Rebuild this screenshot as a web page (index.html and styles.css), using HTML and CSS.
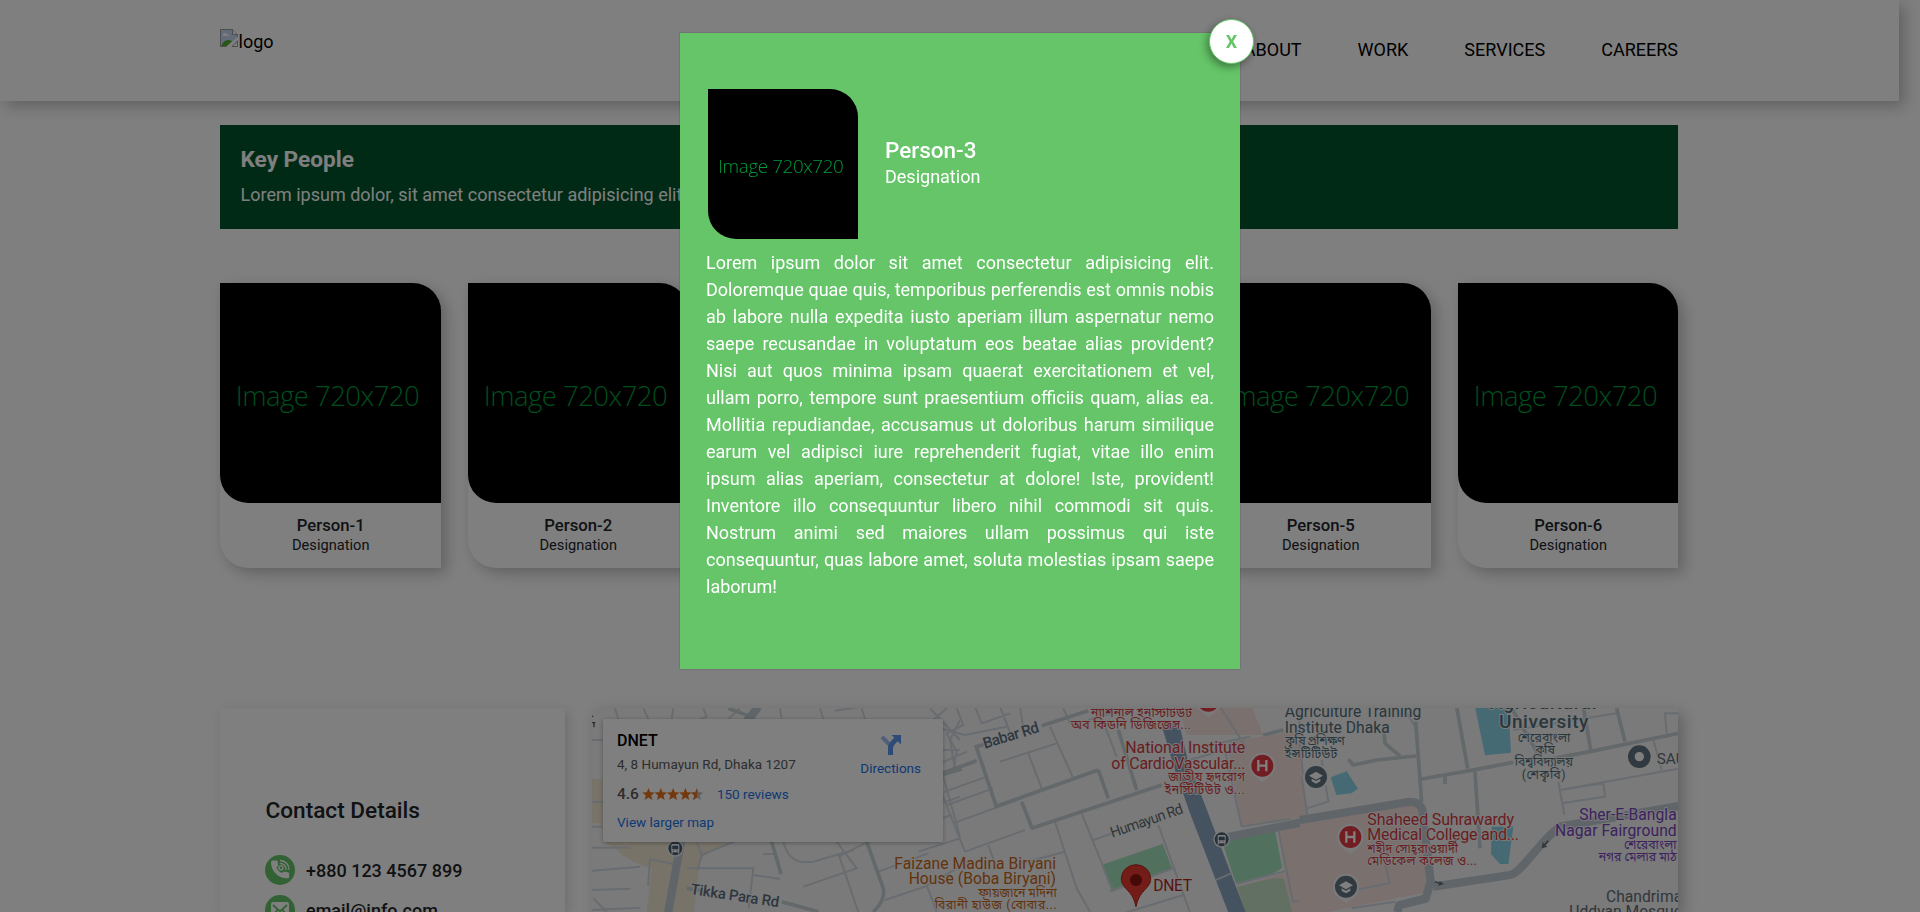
FILE: index.html
```html
<!DOCTYPE html>
<html lang="en">
<head>
<meta charset="utf-8">
<title>Key People</title>
<link rel="stylesheet" href="styles.css">
</head>
<body>
<div class="page">
  <header class="header">
    <div class="container header-inner">
      <div class="logo">
        <svg class="logo-mark" viewBox="0 0 18 18"><path d="M.5 17.5V.5h12l5 5v6l-9 6z" fill="#c6d6f5" stroke="#9a9a9a"/><path d="M12.500 .5v5h5" fill="#fff" stroke="#9a9a9a"/><path d="M3 6c0-1.500 1-2 2-2s2 .6 2.200 1.500c1.200-.2 1.800.5 1.800 1.500H3z" fill="#fff"/><path d="M1 17c2-4 4-6 7-6 2 0 3 .5 4 1.500L7 17z" fill="#4fae32"/><path d="M18 7.500v3.500l-8 7H6z" fill="#fff"/><path d="M17.500 12v5.500H12z" fill="#fff" stroke="#9a9a9a"/></svg><span>logo</span>
      </div>
      <nav class="nav"><a>ABOUT</a><a>WORK</a><a>SERVICES</a><a>CAREERS</a></nav>
    </div>
  </header>
  <main class="container">
    <section class="banner">
      <h1>Key People</h1>
      <p>Lorem ipsum dolor, sit amet consectetur adipisicing elit.</p>
    </section>
    <section class="people">
      <article class="person"><svg class="photo" viewBox="0 0 220 220"><text x="15.500" y="123" textLength="184">Image 720x720</text></svg><h2>Person-1</h2><p>Designation</p></article>
      <article class="person"><svg class="photo" viewBox="0 0 220 220"><text x="15.500" y="123" textLength="184">Image 720x720</text></svg><h2>Person-2</h2><p>Designation</p></article>
      <article class="person"><svg class="photo" viewBox="0 0 220 220"></svg><h2></h2><p></p></article>
      <article class="person"><svg class="photo" viewBox="0 0 220 220"></svg><h2></h2><p></p></article>
      <article class="person"><svg class="photo" viewBox="0 0 220 220"><text x="15.500" y="123" textLength="184">Image 720x720</text></svg><h2>Person-5</h2><p>Designation</p></article>
      <article class="person"><svg class="photo" viewBox="0 0 220 220"><text x="15.500" y="123" textLength="184">Image 720x720</text></svg><h2>Person-6</h2><p>Designation</p></article>
    </section>
    <section class="contact">
      <div class="details">
        <h2>Contact Details</h2>
        <div class="detail">
          <svg class="detail-icon" viewBox="0 0 30 30"><circle cx="15" cy="15" r="15" fill="#65c568"/><path d="M8 5.500l3.500 0c.8 0 1 .5 1.100 1.200l.4 3.500c0 .8-.3 1.200-1.500 2.200 1.200 2.800 3 4.600 5.600 5.700 1-1.300 1.400-1.500 2.200-1.400l3.600.6c.8.2 1.200.5 1.200 1.200v3.200c0 1-.7 1.500-1.800 1.500C12.500 23.200 6 15.500 6 7.200 6 6.200 6.800 5.500 8 5.500z" fill="#fff"/><g fill="none" stroke="#fff" stroke-width="1.300"><path d="M15 5.500a9 9 0 0 1 9 9.500M14.800 8.300a6.500 6.500 0 0 1 6.400 6.700"/><circle cx="16" cy="12.800" r="2"/></g></svg>
          <span>+880 123 4567 899</span>
        </div>
        <div class="detail">
          <svg class="detail-icon" viewBox="0 0 30 30"><circle cx="15" cy="15" r="15" fill="#65c568"/><rect x="6" y="7" width="18" height="15" rx="2" fill="#fff"/><path d="M8 10l7 6.500 7-6.500M8 20l4.500-5M22 20l-4.500-5" fill="none" stroke="#65c568" stroke-width="1.800"/></svg>
          <span>email@info.com</span>
        </div>
      </div>
      <div class="map">
        <svg class="map-canvas" viewBox="592 708 1086 204">
          <g transform="translate(580 700) scale(.33333)">
            <g class="area-sand"><path d="M36 235l35 5 10 60v130l-45-130zM36 310h32v60H36zM75 425h375c-50 25-80 35-90 60l-20 160H200l15-140c-40-10-80-30-110-60z"/></g>
            <g class="road">
              <path d="M36 120h35M36 305h35M36 380h30M36 443h115M36 512l145-12M36 570l115-4M36 630l145-7M40 595l40 41M210 478l-6 80M210 478l70 14M320 505h200l-14 120M520 525l80 12M350 425l15 40-12 45M365 465l100-42M550 462h34M670 560l160-55-60-80M775 460l60 176M775 470l80-40M895 515l150-55M1015 455l125-40M915 600l120-40 105-60M1040 555l30 80M105 25l10 32M190 25l15 32M280 25l-5 32M370 25l10 25-30 12M480 25l-35 32M600 25l5 32M720 25l10 32M765 32l80-12M845 25l10 32M1050 25l90 95M1060 60l40-35M1140 60l-30 60 15 90M1085 150h55M1085 310l55-20M1085 355l30-10M1090 230l50 180"/>
              <path d="M610 425c15 60 50 65 90 60l120-35"/>
            </g>
            <g class="road mid"><path d="M575 425l28 97M445 25l80 30M320 565l60 10M605 605l110 30M860 425l50 140c5 30-10 50-30 71M1085 225l60-18"/></g>
            <path class="road wide" d="M303 425l-40 220"/><path class="road wide" d="M535 20l-35 45"/>
          </g>
          <g transform="translate(940 700) scale(.33333)">
            <g class="area-pink"><path d="M715 20l220 0 35 85-230 0zM860 125l210-30 30 250-195 35zM1015 390l80-22v270h-45zM890 560l140-40 20 116H900z"/></g>
            <g class="area-green"><path d="M484 495l184-63 28 73-182 65zM845 420l160-28 22 112-30 18-110 28z"/><path fill-opacity=".6" d="M893 560l110-26 30 2 24 106H915z"/></g>
            <g class="road">
              <path d="M105 20l20 50M125 70l85-30M0 85l75 20 125-25M50 25l20 50-50 25 30 55-10 60M80 155L-10 195M0 280l140-50M45 368l205-75M75 455l-80-200M75 455l180-65M20 315l140-50M145 435l20 55M245 490l130-35M180 185l170-55M330 80l70 155M265 160l40 105M180 20l35 90M240 20l10 65M345 365l65 200 40 70M425 340l95 235M460 420l80-28M510 575l190-70M550 640l180-55M655 375l95 262M370 25l20 45M445 60l100-30M480 40l50 130M715 190l120-35M840 20l80 125M905 380l-50-230M905 380l150-24M1070 180l30 160M1015 390l45 220M890 552l145-38M1060 605l80-10M780 140l150-30M1075 20l5 70"/>
            </g>
            <g class="road mid"><path d="M107 135l63 188M0 222l110-40M110 140l60-20M305 77l140-45M165 320l310-110M475 210l30 85M275 385l390-130M245 305l32 82M535 90l55 180M970 105l60-15"/></g>
            <path class="road wide" d="M860 412l360-72"/>
            <path d="M660 60h55l28 120 50 130 125 330h-52L750 340l-45-130z" fill="#8ba5c1"/>
            <path d="M828 540l50-22" stroke="#d9dde0" stroke-width="5"/>
          </g>
          <g transform="translate(1300 700) scale(.33333)">
            <path class="area-pink" d="M0 368l330-60c35 0 40 20 42 50l15 170-15 50-290 58H0zM-60 100L0 90l20 260-50 10z"/>
            <g class="area-water"><path d="M525 20h100l8 138-78 8zM92 232l48-18 34 52-20 14-45 5zM575 380h65l-15 112h-25l-27-30z"/></g>
            <g class="road">
              <path d="M20 325l65-20-20-125M5 230l18 120M255 490l14 60-155 30M155 625l130-20M780 270l130-20 5 40-130 20M775 245l18 100M1060 120l25 90M780 270l360-65M640 90l310-50M0 130l10 100M1100 100l-5-60h45M310 25l40 60"/>
            </g>
            <g class="road mid"><path d="M347 65l18 240M365 237l160-28 115-22M725 182l148-28 267-55M470 20l33 185M525 215l15 230M635 25l90 155M850 20l22 130M950 25l25 100M145 178l15 17 70-15 118-12M250 75l5 55 45 38M435 230v22"/></g>
            <path class="road wide" d="M0 360l325-54c45-3 45 30 45 55l22 185-15 50-80 20-5 20M400 560l230-35c35-5 95-110 150-145l360-62"/>
            <path d="M745 422l-18 20M405 545l22 8" stroke="#6d7276" stroke-width="5"/>
            <path d="M725 444l3-18 14 15zM432 552l-17 6 4-15z" fill="#6d7276"/>
          </g>
          <g class="label" transform="translate(580 700) scale(.33333)">
            <g fill="#5d6e82" font-weight="500" font-size="45"><text transform="translate(330 582) rotate(8.500)" textLength="268">Tikka Para Rd</text></g>
            <path d="M36 49h4M34 68h12M42 68v14" stroke="#555d65" stroke-width="4" fill="none"/>
            <g fill="#c76716" font-size="47"><text x="943" y="507" textLength="485">Faizane Madina Biryani</text><text x="986" y="553" textLength="442">House (Boba Biryani)</text><text x="1195" y="590" font-size="37" textLength="235">ফায়জানে মদিনা</text><text x="1064" y="628" font-size="37" textLength="366">বিরানী হাউজ (বোবার...</text></g>
          </g>
          <g class="label" transform="translate(940 700) scale(.33333)">
            <text transform="translate(134 146) rotate(-17)" font-size="46" font-weight="500" fill="#5d6e82" textLength="174">Babar Rd</text>
            <text transform="translate(517 413) rotate(-19)" font-size="44" fill="#646a70" textLength="228">Humayun Rd</text>
            <g fill="#d43c43" font-size="48"><text x="453" y="50" font-size="37" textLength="303">ন্যাশনাল ইনস্টিটিউট</text><text x="393" y="87" font-size="37" textLength="360">অব কিডনি ডিজিজেস...</text><text x="556" y="159" textLength="360">National Institute</text><text x="514" y="206" textLength="402">of CardioVascular...</text><text x="685" y="244" font-size="37" textLength="230">জাতীয় হৃদরোগ</text><text x="674" y="281" font-size="37" textLength="240">ইনস্টিটিউট ও...</text></g>
            <g fill="#546e7a" font-size="47"><text x="1034" y="52" textLength="410">Agriculture Training</text><text x="1034" y="98" textLength="315">Institute Dhaka</text><text x="1034" y="136" font-size="37" textLength="178">কৃষি প্রশিক্ষণ</text><text x="1034" y="174" font-size="37" textLength="158">ইন্সটিটিউট</text></g>
            <text x="640" y="573" font-size="47" fill="#b3261e" textLength="116">DNET</text>
          </g>
          <g class="label" transform="translate(1300 700) scale(.33333)">
            <g fill="#546e7a" font-weight="500" font-size="57"><text x="570" y="27" textLength="320">Agricultural</text><text x="597" y="85" textLength="268">University</text></g>
            <g fill="#546e7a" font-size="37"><text x="653" y="125" textLength="158">শেরেবাংলা</text><text x="702" y="163" textLength="58">কৃষি</text><text x="643" y="199" textLength="175">বিশ্ববিদ্যালয়</text><text x="665" y="238" textLength="132">(শেকৃবি)</text></g>
            <text x="1070" y="192" font-size="46" fill="#646e74">SAU</text>
            <g fill="#d43c43" font-size="48"><text x="202" y="374" textLength="440">Shaheed Suhrawardy</text><text x="202" y="420" textLength="455">Medical College and...</text><text x="202" y="458" font-size="37" textLength="272">শহীদ সোহ্‌রাওয়ার্দী</text><text x="202" y="496" font-size="37" textLength="328">মেডিকেল কলেজ ও...</text></g>
            <g fill="#7a45bd" font-size="47"><text x="838" y="360" textLength="292">Sher-E-Bangla</text><text x="765" y="407" textLength="365">Nagar Fairground</text><text x="972" y="446" font-size="37" textLength="158">শেরেবাংলা</text><text x="896" y="482" font-size="37" textLength="234">নগর মেলার মাঠ</text></g>
            <g fill="#646e74" font-size="47"><text x="918" y="606">Chandrima</text><text x="808" y="652">Uddyan Mosque</text></g>
          </g>
          <defs>
            <path id="drop" d="M0 -39a39 39 0 0 1 39 39c0 22-13 29-23 38L0 50-16 38C-26 29-39 22-39 0A39 39 0 0 1 0-39z"/>
            <g id="school"><use href="#drop" fill="#f4f4f4"/><circle r="33" fill="#607580"/><path d="M-21-4L0-16 21-4 0 8zM-13 5v8L0 20l13-7V5L0 12z" fill="#fff"/></g>
            <g id="hospital"><use href="#drop" fill="#f4f4f4"/><circle r="33" fill="#e23b44"/><path d="M-12-17v34M12-17v34M-12 0h24" stroke="#fff" stroke-width="7"/></g>
            <g id="bus"><circle r="25" fill="#f4f4f4"/><circle r="21" fill="#4b6076"/><rect x="-12" y="-13" width="24" height="25" rx="4" fill="#fff"/><path d="M-8-7H8V2H-8zM-8 7h4M4 7h4" fill="#4b6076" stroke="#4b6076" stroke-width="2"/><path d="M-10 12v4M10 12v4" stroke="#fff" stroke-width="4"/></g>
          </defs>
          <g transform="translate(580 700) scale(.33333)"><use href="#bus" x="286" y="445"/></g>
          <g transform="translate(940 700) scale(.33333)"><use href="#hospital" x="805" y="2"/><use href="#hospital" x="967" y="197"/><use href="#bus" x="845" y="418"/><path d="M588 620c-6-25-12-35-24-48-14-15-20-22-20-36a44 42 0 0 1 88 0c0 14-6 21-20 36-12 13-18 23-24 48z" fill="#e8392e" stroke="#a9241c" stroke-width="3"/><circle cx="588" cy="540" r="18" fill="#8b1410"/></g>
          <g transform="translate(1300 700) scale(.33333)"><use href="#school" x="48" y="231"/><use href="#school" x="138" y="560"/><use href="#hospital" x="151" y="411"/><use href="#drop" x="1018" y="170" fill="#f4f4f4"/><circle cx="1018" cy="170" r="24" fill="#fff" stroke="#607580" stroke-width="20"/></g>
        </svg>
        <div class="place">
          <div class="place-main">
            <strong>DNET</strong>
            <p class="address">4, 8 Humayun Rd, Dhaka 1207</p>
            <p class="rating"><b>4.6</b><svg class="stars" viewBox="0 0 61 13"><defs><path id="star" d="M6.500 0l1.700 4.300 4.500.3-3.500 2.900 1.200 4.500-3.900-2.500L2.600 12l1.200-4.500L.3 4.600l4.500-.3z"/></defs><g fill="#e7711b"><use href="#star"/><use href="#star" x="12.300"/><use href="#star" x="24.600"/><use href="#star" x="36.900"/></g><use href="#star" x="48.500" fill="#bbb"/><path d="M55 0v9.500L51.100 12l1.200-4.500-3.500-2.900 4.500-.3z" fill="#e7711b"/></svg><a>150 reviews</a></p>
            <a>View larger map</a>
          </div>
          <div class="directions"><svg viewBox="0 0 22 20"><path d="M2 2l8 8" stroke="#a3c0f5" stroke-width="4"/><path d="M10.500 20v-7c0-3 1-4 3-6l3-3" fill="none" stroke="#5c94ee" stroke-width="5"/><path d="M11.500 0H21v9.500z" fill="#5c94ee"/></svg><a>Directions</a></div>
        </div>
      </div>
    </section>
  </main>
</div>
<div class="overlay">
  <div class="modal">
    <button class="close">X</button>
    <div class="modal-head">
      <svg class="photo modal-photo" viewBox="0 0 220 220"><text x="15" y="123" textLength="184">Image 720x720</text></svg>
      <div class="modal-name"><h2>Person-3</h2><p>Designation</p></div>
    </div>
    <p class="bio">Lorem ipsum dolor sit amet consectetur adipisicing elit. Doloremque quae quis, temporibus perferendis est omnis nobis ab labore nulla expedita iusto aperiam illum aspernatur nemo saepe recusandae in voluptatum eos beatae alias provident? Nisi aut quos minima ipsam quaerat exercitationem et vel, ullam porro, tempore sunt praesentium officiis quam, alias ea. Mollitia repudiandae, accusamus ut doloribus harum similique earum vel adipisci iure reprehenderit fugiat, vitae illo enim ipsum alias aperiam, consectetur at dolore! Iste, provident! Inventore illo consequuntur libero nihil commodi sit quis. Nostrum animi sed maiores ullam possimus qui iste consequuntur, quas labore amet, soluta molestias ipsam saepe laborum!</p>
  </div>
</div>
</body>
</html>
```
FILE: styles.css
```css
* { box-sizing: border-box; margin: 0; padding: 0; }
html { overflow: hidden; }
body { height: 912px; overflow: hidden; background: #fff; color: #212529; font: 18px/27px Roboto, sans-serif; }
.page { width: 1920px; height: 912px; padding-right: 21px; overflow: hidden; background: #fff; }
.container { width: 1458px; margin: 0 auto 0 220px; }
.header { height: 101px; background: #fff; box-shadow: 5px 5px 15px rgba(0, 0, 0, .25); color: #000; }
.header-inner { display: flex; justify-content: space-between; }
.logo { display: flex; padding-top: 28px; }
.logo-mark { width: 18px; height: 18px; margin: 1px .5px 0 0; }
.nav { display: flex; gap: 56px; padding-top: 36px; }
.banner { height: 104px; margin-top: 24px; padding: 21px 20.500px; background: #00552a; color: #fff; }
.banner h1 { font-size: 22.600px; line-height: 27px; font-weight: 700; }
.banner p { margin-top: 8px; }
.people { display: grid; grid-template-columns: repeat(6, 1fr); gap: 27px; margin-top: 54px; }
.person { height: 285px; text-align: center; border-radius: 0 28px 0 28px; background: #fff; box-shadow: 5px 5px 15px rgba(0, 0, 0, .25); }
.photo { display: block; width: 100%; height: 220px; background: #000; border-radius: 0 28px 0 28px; }
.photo text { font: 300 27.500px "Open Sans", sans-serif; fill: #009a3c; }
.person h2 { margin-top: 13px; padding-left: 1px; font-size: 16.700px; line-height: 20px; font-weight: 500; }
.person p { margin-top: -1px; padding-left: 1px; font-size: 14.630px; line-height: 20px; }
.contact { display: flex; gap: 27px; margin-top: 140px; }
.details { width: 345px; height: 204px; padding: 89px 45px 0; overflow: hidden; box-shadow: 3px 3px 12px rgba(0, 0, 0, .15); }
.details h2 { margin: 0 0 31px .5px; font-size: 22.600px; line-height: 27px; font-weight: 500; }
.detail { display: flex; align-items: center; gap: 11px; height: 30px; margin-bottom: 10px; font-weight: 500; }
.detail-icon { width: 30px; height: 30px; }
.map { position: relative; width: 1086px; height: 204px; background: #f4f4f4; box-shadow: 5px 5px 15px rgba(0, 0, 0, .25); }
.map-canvas { display: block; width: 1086px; height: 204px; }
.area-sand { fill: #f0e7d3; }
.area-pink { fill: #f5e0dd; }
.area-green { fill: #a3e0bb; }
.area-water { fill: #8ad4e6; }
.road { fill: none; stroke: #d0d9e0; stroke-width: 6; }
.mid { stroke: #c6d0d7; stroke-width: 11; }
.wide { stroke: #c0cbd3; stroke-width: 25; stroke-linejoin: round; }
.label { font-family: Roboto, "Noto Sans Bengali", sans-serif; paint-order: stroke; stroke: #f4f4f4; stroke-width: 6; stroke-linejoin: round; }
.place { position: absolute; left: 11px; top: 11px; width: 340px; height: 123px; display: flex; justify-content: space-between; padding: 12px 22px 0 14px; background: #fff; border-radius: 2px; box-shadow: 0 1px 4px rgba(0, 0, 0, .3); font-size: 13.500px; line-height: 20px; }
.place a { color: #1a73e8; }
.place strong { display: block; font-size: 16px; line-height: 20px; font-weight: 500; color: #000; }
.address { margin-top: 3px; color: #5b5b5b; }
.rating { display: flex; align-items: center; margin: 10px 0 8px; }
.rating b { font-size: 15.500px; font-weight: 500; color: #5b5b5b; }
.stars { width: 61px; height: 13px; margin: 0 14px 0 3px; }
.directions { display: flex; flex-direction: column; align-items: center; padding-top: 4px; }
.directions svg { width: 22px; height: 20px; margin-bottom: 3px; }
.overlay { position: fixed; inset: 0; padding-top: 33px; background: rgba(0, 0, 0, .5); }
.modal { position: relative; width: 560px; height: 636px; margin: 0 auto; padding: 56px 26px 0; background: #65c568; color: #fff; box-shadow: 0 0 1px rgba(0, 0, 0, .5); }
.modal-head { display: flex; align-items: center; gap: 27px; padding-left: 2px; }
.modal-name { padding-bottom: 1px; }
.modal-photo { width: 150px; height: 150px; }
.modal-head h2 { font-size: 22.500px; line-height: 27px; font-weight: 500; }
.modal-name p { margin-top: -1px; }
.bio { margin-top: 10px; text-align: justify; }
.close { position: absolute; top: -14px; right: -14px; width: 45px; height: 45px; border: 1px solid #65c568; border-radius: 50%; background: #fff; color: #65c568; font: 700 18px/27px Roboto, sans-serif; box-shadow: -2px 3px 8px rgba(0, 0, 0, .4); }
```
